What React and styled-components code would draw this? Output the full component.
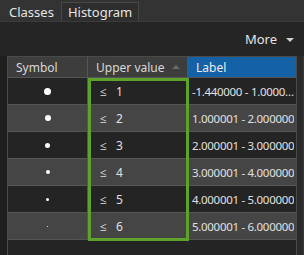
import React from "react";
import styled, { createGlobalStyle } from "styled-components";

const Global = createGlobalStyle`
  html, body { margin: 0; padding: 0; background: #202020; }
  body { font-family: "Noto Sans", "Open Sans", sans-serif; color: #e2e2e2; }
`;

const Panel = styled.div`
  width: 304px;
  height: 255px;
  display: flex;
  flex-direction: column;
  background: #252525;
  overflow: hidden;
`;

const TabBar = styled.div`
  height: 21px;
  display: flex;
  align-items: flex-end;
  background: #333333;
  border-bottom: 1px solid #3c3c3c;
  padding-left: 2px;
`;

const Tab = styled.div`
  height: 19px;
  box-sizing: border-box;
  padding: 0 6px;
  display: flex;
  align-items: center;
  font-size: 13px;
  color: #e4e4e4;
  border: 1px solid ${(p) => (p.$hover ? "#474747" : "transparent")};
  border-bottom: none;
  background: ${(p) => (p.$hover ? "#2e2e2e" : "transparent")};
`;

const Toolbar = styled.div`
  height: 34px;
  display: flex;
  align-items: center;
  justify-content: flex-end;
  padding-right: 10px;
  gap: 9px;
  font-size: 13px;
  color: #e4e4e4;
`;

const Caret = styled.span`
  width: 0;
  height: 0;
  border-left: 4px solid transparent;
  border-right: 4px solid transparent;
  border-top: 4px solid #d0d0d0;
  margin-top: 1px;
`;

const TableArea = styled.div`
  flex: 1;
  display: flex;
  background: #1e1e1e;
`;

const Table = styled.div`
  position: relative;
  margin-left: 7px;
  width: 288px;
  border-left: 1px solid #4a4a4a;
  border-right: 1px solid #4a4a4a;
  background: #242424;
`;

const Gutter = styled.div`
  flex: 1;
  background: #2a2a2a;
  border-right: 1px solid #3a3a3a;
`;

const Grid = styled.div`
  display: grid;
  grid-template-columns: 80px 100px 108px;
`;

const HeadCell = styled.div`
  height: 22px;
  box-sizing: border-box;
  display: flex;
  align-items: center;
  justify-content: space-between;
  padding: 0 7px 0 ${(p) => (p.$pad ?? 8)}px;
  font-size: 12px;
  color: ${(p) => (p.$active ? "#e8eef6" : "#d8d8d8")};
  background: ${(p) => (p.$active ? "#1561a6" : "#3d3d3d")};
  border-top: 1px solid #4a4a4a;
  border-bottom: 1px solid #555555;
  border-right: ${(p) => (p.$last ? "none" : "1px solid #555555")};
`;

const SortArrow = styled.span`
  width: 0;
  height: 0;
  border-left: 4px solid transparent;
  border-right: 4px solid transparent;
  border-bottom: 4px solid #6a6a6a;
`;

const Cell = styled.div`
  height: 27px;
  box-sizing: border-box;
  display: flex;
  align-items: center;
  font-size: 12px;
  color: #e0e0e0;
  background: ${(p) => (p.$alt ? "#454545" : "#242424")};
  border-bottom: 1px solid #555555;
  border-right: ${(p) => (p.$last ? "none" : "1px solid #555555")};
  justify-content: ${(p) => (p.$center ? "center" : "flex-start")};
  padding-left: ${(p) => (p.$pad ?? 0)}px;
  overflow: hidden;
  white-space: nowrap;
`;

const LabelText = styled.span`
  font-size: 11.5px;
  letter-spacing: -0.3px;
  overflow: hidden;
  text-overflow: ellipsis;
  white-space: nowrap;
`;

const Dot = styled.span`
  display: block;
  background: #ffffff;
  border-radius: 50%;
`;

const Le = styled.span`
  width: 16px;
  font-size: 12px;
  color: #dcdcdc;
`;

const Num = styled.span`
  font-size: 12px;
`;

const Selection = styled.div`
  position: absolute;
  left: 80px;
  top: 22px;
  width: 101px;
  height: 163px;
  box-sizing: border-box;
  border: 3px solid #5da22a;
  pointer-events: none;
`;

const rows = [
  { size: 7, n: 1, label: "-1.440000 - 1.000000" },
  { size: 6, n: 2, label: "1.000001 - 2.000000" },
  { size: 5, n: 3, label: "2.000001 - 3.000000" },
  { size: 4, n: 4, label: "3.000001 - 4.000000" },
  { size: 3, n: 5, label: "4.000001 - 5.000000" },
  { size: 1, n: 6, label: "5.000001 - 6.000000" },
];

export default function App() {
  return (
    <>
      <Global />
      <Panel>
        <TabBar>
          <Tab>Classes</Tab>
          <Tab $hover>Histogram</Tab>
        </TabBar>
        <Toolbar>
          <span>More</span>
          <Caret />
        </Toolbar>
        <TableArea>
          <Table>
            <Grid>
              <HeadCell>Symbol</HeadCell>
              <HeadCell>
                Upper value
                <SortArrow />
              </HeadCell>
              <HeadCell $active $last>Label</HeadCell>
              {rows.map((r, i) => (
                <React.Fragment key={r.n}>
                  <Cell $alt={i % 2 === 1} $center>
                    <Dot style={{ width: r.size, height: r.size }} />
                  </Cell>
                  <Cell $alt={i % 2 === 1} $pad={12}>
                    <Le>≤</Le>
                    <Num>{r.n}</Num>
                  </Cell>
                  <Cell $alt={i % 2 === 1} $pad={4} $last>
                    <LabelText>{r.label}</LabelText>
                  </Cell>
                </React.Fragment>
              ))}
            </Grid>
            <Selection />
          </Table>
          <Gutter />
        </TableArea>
      </Panel>
    </>
  );
}
